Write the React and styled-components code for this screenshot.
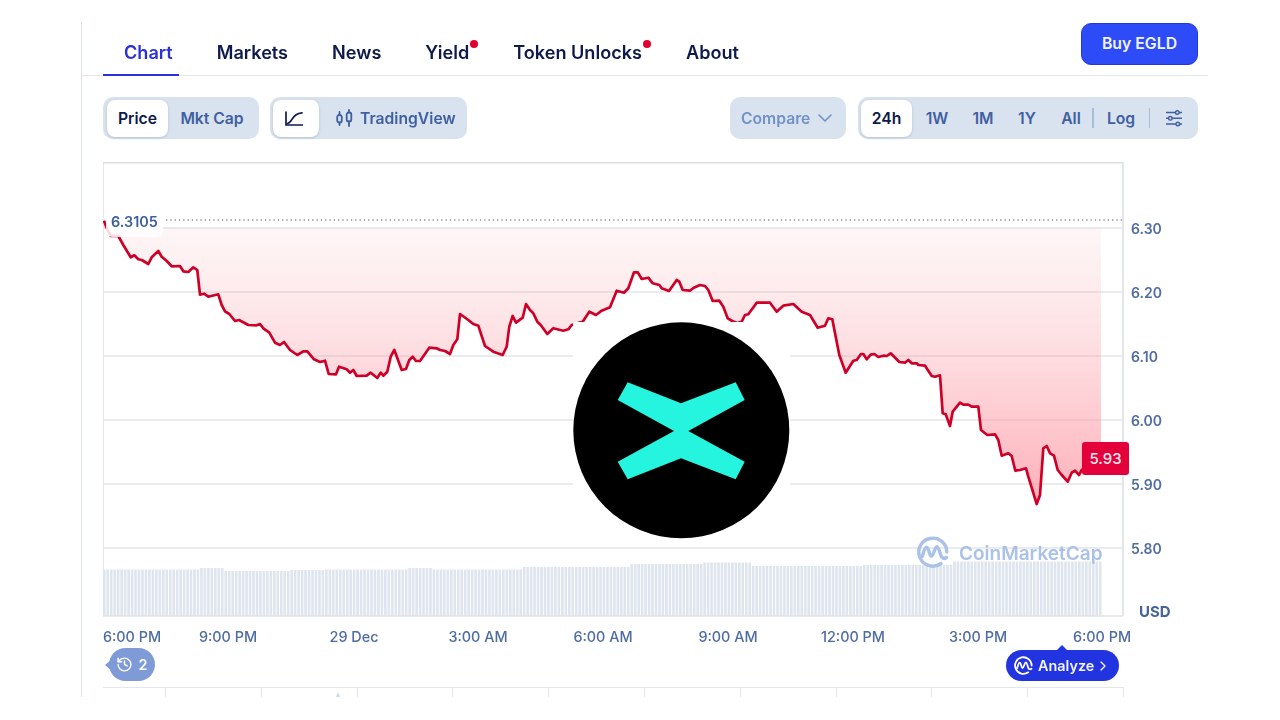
import React from "react";
import styled, { createGlobalStyle } from "styled-components";
import { ChevronDown, ChevronRight, History } from "lucide-react";

const Global = createGlobalStyle`
  html, body { margin: 0; padding: 0; background: #fff; }
  body { font-family: Inter, "Liberation Sans", sans-serif; }
`;

const Page = styled.div`
  width: 1280px;
  height: 720px;
  padding: 22px 0 0 81px;
  box-sizing: border-box;
  background: #fff;
`;
const Panel = styled.div`
  position: relative;
  width: 1127px;
  height: 675px;
  box-sizing: border-box;
  border-left: 1px solid #d9e2ee;
  overflow: hidden;
`;
const Soft = styled.div`
  filter: blur(0.45px);
`;
const TabBar = styled.div`
  display: flex;
  justify-content: space-between;
  height: 54px;
  box-sizing: border-box;
  padding: 0 10px 0 42px;
  border-bottom: 1.5px solid #e1e7ef;
`;
const Tabs = styled.nav`
  display: flex;
  gap: 44px;
`;
const Tab = styled.a`
  position: relative;
  display: block;
  height: 54px;
  box-sizing: border-box;
  padding-top: 19px;
  font-size: 18.1px;
  line-height: 22px;
  font-weight: 600;
  color: ${(p) => (p.$active ? "#2a30dc" : "#0d1a4b")};
  &::after {
    content: ${(p) => (p.$active ? '""' : "none")};
    position: absolute;
    left: -21px;
    right: -6px;
    bottom: 0;
    height: 2px;
    background: #2a30dc;
  }
  &::before {
    content: ${(p) => (p.$dot ? '""' : "none")};
    position: absolute;
    right: -9px;
    top: 18px;
    width: 8px;
    height: 8px;
    border-radius: 50%;
    background: #e2002e;
  }
`;
const BuyButton = styled.button`
  width: 117px;
  height: 42px;
  margin-top: 1px;
  padding: 0 0 2px;
  border: 1.5px solid #2338d8;
  border-radius: 10px;
  background: #2d4bf6;
  color: #f1f4ff;
  font: 600 15.8px Inter, sans-serif;
`;
const Controls = styled.div`
  display: flex;
  justify-content: space-between;
  height: 42px;
  padding: 21px 10px 0 21px;
`;
const ControlSide = styled.div`
  display: flex;
  gap: ${(p) => p.$gap}px;
`;
const Group = styled.div`
  display: flex;
  align-items: center;
  height: 42px;
  box-sizing: border-box;
  padding: 0 ${(p) => p.$right ?? 4}px 0 ${(p) => p.$left ?? 4}px;
  border-radius: 10px;
  background: #d9e3ef;
`;
const Seg = styled.div`
  display: flex;
  align-items: center;
  justify-content: ${(p) => (p.$pad ? "flex-start" : "center")};
  gap: 7px;
  width: ${(p) => p.$w}px;
  height: 37px;
  box-sizing: border-box;
  padding-left: ${(p) => p.$pad || 0}px;
  border-radius: 8px;
  font-size: 15.7px;
  font-weight: 600;
  color: ${(p) => (p.$on ? "#0d1a4b" : "#3f60a0")};
  background: ${(p) => (p.$on ? "#fff" : "transparent")};
  box-shadow: ${(p) => (p.$on ? "0 1px 3px rgba(70,90,130,.25)" : "none")};
`;
const CompareBox = styled(Group)`
  gap: 3px;
  width: 116px;
  padding: 0 0 0 11px;
  font-size: 15.7px;
  font-weight: 600;
  color: #7291c9;
`;
const Divider = styled.span`
  flex: none;
  width: 1.5px;
  height: 20px;
  background: #a9bcdb;
`;
const ChartArea = styled.div`
  position: relative;
  width: 1105px;
  height: 500px;
  margin: 23px 0 0 21px;
`;
const ChartSvg = styled.svg`
  display: block;
`;
const AxisY = styled.text`
  font-size: 14px;
  font-weight: 600;
  fill: #4f6ca3;
  dominant-baseline: central;
`;
const AxisX = styled.text`
  font-size: 14.4px;
  font-weight: 500;
  fill: #4f6ca3;
  text-anchor: middle;
  dominant-baseline: central;
`;
const AxisUnit = styled.text`
  font-size: 15px;
  font-weight: 700;
  fill: #46639b;
  dominant-baseline: central;
`;
const OpenLabel = styled.div`
  position: absolute;
  left: 3px;
  top: 50px;
  width: 57px;
  height: 25px;
  box-sizing: border-box;
  padding: 0 0 0 5px;
  border-radius: 6px;
  background: rgba(255, 255, 255, 0.85);
  font-size: 14.4px;
  line-height: 20px;
  font-weight: 600;
  color: #3d5f9f;
`;
const PriceTag = styled.div`
  position: absolute;
  left: 979px;
  top: 280px;
  width: 47px;
  height: 33px;
  border-radius: 3px;
  background: #e4003a;
  color: #ffe9ee;
  display: flex;
  align-items: center;
  justify-content: center;
  font-size: 15px;
  font-weight: 500;
`;
const Watermark = styled.div`
  position: absolute;
  left: 814px;
  top: 374px;
  display: flex;
  align-items: center;
  gap: 10px;
  font-size: 19px;
  font-weight: 600;
  color: #aac1e8;
`;
const WatermarkName = styled.span`
  padding-top: 3px;
`;
const HistoryPill = styled.div`
  position: absolute;
  left: 6px;
  top: 486px;
  width: 46px;
  height: 33px;
  border-radius: 17px;
  background: #7e9bd8;
  color: #fff;
  display: flex;
  align-items: center;
  justify-content: center;
  gap: 5px;
  font-size: 14.5px;
  font-weight: 600;
  &::before {
    content: "";
    position: absolute;
    left: -4px;
    top: 12px;
    border-style: solid;
    border-width: 5px 6px 5px 0;
    border-color: transparent #7e9bd8 transparent transparent;
  }
`;
const AnalyzeButton = styled.div`
  position: absolute;
  left: 903px;
  top: 488px;
  width: 113px;
  height: 31px;
  box-sizing: border-box;
  padding-left: 8px;
  border-radius: 16px;
  background: #2233e0;
  color: #f2f4ff;
  display: flex;
  align-items: center;
  gap: 5px;
  font-size: 14.4px;
  font-weight: 600;
  &::before {
    content: "";
    position: absolute;
    left: 50px;
    top: -5px;
    border-style: solid;
    border-width: 0 6px 6px 6px;
    border-color: transparent transparent #2233e0 transparent;
  }
`;
const AnalyzeChevron = styled(ChevronRight)`
  margin-left: -4px;
`;
const Strip = styled.div`
  position: relative;
  display: flex;
  width: 1021px;
  height: 12px;
  margin: 25px 0 0 21px;
  border-top: 1.5px solid #e3e7ec;
`;
const StripCell = styled.div`
  flex: ${(p) => (p.$first ? "0 0 63px" : "1")};
  box-sizing: border-box;
  border-right: 1.5px solid #e3e7ec;
`;
const StripMark = styled.div`
  position: absolute;
  left: 232px;
  top: 4px;
  border-style: solid;
  border-width: 0 3.5px 7px 3.5px;
  border-color: transparent transparent #cfdcee transparent;
`;
const LogoBox = styled.div`
  position: absolute;
  left: 491px;
  top: 300px;
  width: 217px;
  height: 217px;
  background: #fff;
`;

const LINE = `104,220.7 106.7,228 110.7,236 118.3,236 123.3,245 130.7,257.3 134.3,255.3 138.3,259.3 141.7,260 148.3,264 151.7,257.3 158.3,251 161.7,256.7 166.7,261 171.7,266.3 180,266 183.3,271.3 188.3,272 193.3,267.3 197.3,270 200,294.7 204,293.7 208.3,296.7 218.3,294.3 221.7,305 225,311.3 229.3,314 235,321 239,320 248.3,325 256.7,325.3 260,324 263.3,328.3 269.3,332.7 275,342.7 280,345 284,342 290,350 297.3,355 303.3,351.3 307.3,351.3 314,359.3 320,362 325,360.7 328.7,374 336,374.3 339,366.7 346.7,369.3 350,372.7 353.3,370 356.7,376 366.7,375.7 370.7,372.7 377.3,378 380.7,372.7 383.3,375.7 387.3,371.7 390.7,356.7 394.3,350 401.7,370 406,369 409.3,360 412.7,356.7 416,361 420,361 429.3,347.7 436.7,348.3 440,350 445,351 450,354 453.3,345 457.3,339.3 460,314 468.3,320 473.3,324 478.3,325.7 485,346 493.3,351.7 502.7,355 506.7,346.7 509.3,326.7 512.7,316 516,322.7 522.7,317.7 526,304 530,310 533.3,313.3 537.3,321.7 540.7,325 547.3,334 553.3,328.3 563.3,330.7 568.3,329.3 571.7,325 578,323 582.7,321.7 589.3,311.7 596,315 601.7,310.7 610,307.3 616.7,290.7 624,292.7 628.3,288.3 634,272.3 637.7,272.3 641.7,279 648.3,277.7 652.7,283.3 659.3,285 661.7,288.3 669,291 676.7,280 679.3,281.7 682.7,290 690,290.7 693.3,288 700,285 705,286 708.3,290 712.7,301 719.3,300.7 723.3,306.7 727.7,318.3 732.3,321 737,323 741.7,321.7 745,315 748.3,314.3 756.7,302.7 770,302.7 776.7,311.7 783.3,305.7 793.3,304 801.7,311.7 810,315 817.7,327.7 825,325.7 828.3,318.3 832.3,319.3 839.3,355 845.7,372.7 853.3,360.7 856.7,360 861,354 863.3,354 866.7,359.3 870.7,354.7 874.3,354 878.3,357 883.3,355.7 886.7,356 890.7,353.3 899.3,362 905,362.7 908.3,360 911.7,363.3 916.7,363.3 918.3,365 925,365.7 931.7,376 935,376.7 940,375.3 942.7,413.3 945.7,414.3 950,426 952.7,411.7 960,402.7 963.3,404.7 968.3,404.7 971.7,406.7 978.3,406.7 981,430 987.3,435 995,434.3 998.3,440 1001.7,455.7 1008.3,453.3 1011.7,456 1015.3,470.7 1020,470 1026,468.3 1028.3,476.7 1036.7,504 1040,495 1043.3,448.3 1046.7,446 1050,453.3 1054,455.7 1057.7,470 1061.7,475 1067.7,481.7 1071.7,472.7 1075,470.7 1079,475 1081.7,470 1090,466`;

const GRID = [
  [228, "6.30"],
  [292, "6.20"],
  [356, "6.10"],
  [420, "6.00"],
  [484, "5.90"],
  [548, "5.80"],
];
const XLABELS = [
  [132, "6:00 PM"],
  [228, "9:00 PM"],
  [354, "29 Dec"],
  [478, "3:00 AM"],
  [603, "6:00 AM"],
  [728, "9:00 AM"],
  [853, "12:00 PM"],
  [978, "3:00 PM"],
  [1102, "6:00 PM"],
];
const VOLUME_STEPS = [
  [200, 569.5], [223, 568], [290, 571], [325, 570], [407, 569.5], [430, 568],
  [520, 569.5], [630, 567], [700, 564], [750, 562.5], [860, 566], [950, 565], [1102, 561.5],
];
const VOLUME = Array.from({ length: 288 }, (_, i) => {
  const x = 103 + i * 3.47;
  const step = VOLUME_STEPS.find((s) => x < s[0]) || VOLUME_STEPS[VOLUME_STEPS.length - 1];
  return { x, top: step[1] };
});

const LineIconSvg = styled.svg`
  margin-right: 4px;
`;
const LineIcon = () => (
  <LineIconSvg width="18" height="15" viewBox="0 0 18 15" fill="none" stroke="#0d1a4b" strokeWidth="1.700" strokeLinecap="round">
    <path d="M1 1v13h16.500" />
    <path d="M2.500 12.500c2.500-.3 3.400-2 4.800-4.600C8.700 5.300 10.800 2.500 17 1.800" />
  </LineIconSvg>
);
const CandleIcon = () => (
  <svg width="17" height="18" viewBox="0 0 17 18" fill="none" stroke="#3f60a0" strokeWidth="1.800" strokeLinecap="round">
    <rect x="1.200" y="6" width="4.600" height="7.500" rx="2" />
    <path d="M3.500 3v3M3.500 13.500v2.500" />
    <rect x="10.700" y="3.500" width="4.600" height="9" rx="2" />
    <path d="M13 1v2.500M13 12.500V17" />
  </svg>
);
const SlidersIcon = () => (
  <svg width="18" height="18" viewBox="0 0 18 18" fill="none" stroke="#3f60a0" strokeWidth="1.400">
    <path d="M1 3.500h9.500M14 3.500h3M1 9.300h2.500M7 9.300h10M1 15h10M14.500 15h2.500" />
    <circle cx="12.300" cy="3.500" r="1.800" />
    <circle cx="5.300" cy="9.300" r="1.800" />
    <circle cx="12.800" cy="15" r="1.800" />
  </svg>
);
const CmcMark = ({ size, color, width = 3.4 }) => (
  <svg width={size} height={size} viewBox="0 0 32 32" fill="none" stroke={color} strokeWidth={width} strokeLinecap="round" strokeLinejoin="round">
    <path d="M29.500 21.500c-1.700 1.200-3.700 1-5-.7-1-1.300-2.700-10-4.500-10-2.300 0-3.400 9.400-5.700 9.400-2.100 0-2.300-9.100-4.700-9.100-2 0-3 5.600-4.400 9.400" />
    <path d="M29.800 16A14 14 0 1 0 24 27.500" />
  </svg>
);

export default function App() {
  const fill = `103,228 ${LINE} 1101,466 1101,228`;
  return (
    <>
      <Global />
      <Page>
        <Panel>
          <Soft>
            <TabBar>
              <Tabs>
                <Tab $active>Chart</Tab>
                <Tab>Markets</Tab>
                <Tab>News</Tab>
                <Tab $dot>Yield</Tab>
                <Tab $dot>Token Unlocks</Tab>
                <Tab>About</Tab>
              </Tabs>
              <BuyButton>Buy EGLD</BuyButton>
            </TabBar>
            <Controls>
              <ControlSide $gap={11}>
                <Group $right={3}>
                  <Seg $on $w={61}>Price</Seg>
                  <Seg $w={88}>Mkt Cap</Seg>
                </Group>
                <Group $left={3} $right={3}>
                  <Seg $on $w={46}><LineIcon /></Seg>
                  <Seg $w={145} $pad={17}><CandleIcon />TradingView</Seg>
                </Group>
              </ControlSide>
              <ControlSide $gap={12}>
                <CompareBox>Compare<ChevronDown size={24} strokeWidth={1.6} /></CompareBox>
                <Group $left={3} $right={0}>
                  <Seg $on $w={51}>24h</Seg>
                  <Seg $w={50}>1W</Seg>
                  <Seg $w={42}>1M</Seg>
                  <Seg $w={46}>1Y</Seg>
                  <Seg $w={42}>All</Seg>
                  <Divider />
                  <Seg $w={55}>Log</Seg>
                  <Divider />
                  <Seg $w={48}><SlidersIcon /></Seg>
                </Group>
              </ControlSide>
            </Controls>
            <ChartArea>
              <ChartSvg width="1105" height="500" viewBox="103 162 1105 500">
                <defs>
                  <linearGradient id="area" gradientUnits="userSpaceOnUse" x1="0" y1="228" x2="0" y2="500">
                    <stop offset="0" stopColor="#f7b5ba" stopOpacity="0.12" />
                    <stop offset="1" stopColor="#ff7f8e" stopOpacity="0.62" />
                  </linearGradient>
                </defs>
                <path d="M103 616V162.700H1123V616" fill="none" stroke="#dcdfe3" strokeWidth="1.500" />
                {GRID.map(([y]) => (
                  <line key={y} x1="103" x2="1123" y1={y} y2={y} stroke="#e2e5e9" strokeWidth="1.500" />
                ))}
                {VOLUME.map((b) => (
                  <rect key={b.x} x={b.x} y={b.top} width="2.600" height={616 - b.top} fill="#dee5ee" />
                ))}
                <line x1="103" x2="1123" y1="616" y2="616" stroke="#dfe3e8" strokeWidth="1.500" />
                <polygon points={fill} fill="url(#area)" />
                <line x1="166" x2="1123" y1="220" y2="220" stroke="#8b8f95" strokeWidth="1.300" strokeDasharray="1.300 3" />
                <polyline points={LINE} fill="none" stroke="#cf0028" strokeWidth="2.700" strokeLinejoin="round" />
                {GRID.map(([y, t]) => (
                  <AxisY key={t} x="1131" y={y}>{t}</AxisY>
                ))}
                <AxisUnit x="1139" y="611">USD</AxisUnit>
                {XLABELS.map(([x, t]) => (
                  <AxisX key={x} x={x} y="636">{t}</AxisX>
                ))}
              </ChartSvg>
              <OpenLabel>6.3105</OpenLabel>
              <PriceTag>5.93</PriceTag>
              <Watermark>
                <CmcMark size={32} color="#aac1e8" />
                <WatermarkName>CoinMarketCap</WatermarkName>
              </Watermark>
              <HistoryPill><History size={17} strokeWidth={2} />2</HistoryPill>
              <AnalyzeButton>
                <CmcMark size={19} color="#fff" width={3} />
                Analyze
                <AnalyzeChevron size={16} strokeWidth={2} />
              </AnalyzeButton>
            </ChartArea>
            <Strip>
              <StripCell $first />
              {Array.from({ length: 10 }, (_, i) => <StripCell key={i} />)}
              <StripMark />
            </Strip>
          </Soft>
          <LogoBox>
            <svg width="217" height="217" viewBox="573 322 217 217">
              <circle cx="681.300" cy="430.300" r="108" fill="#000" />
              <polygon
                fill="#25f5de"
                points="627.700,382.300 681,403.300 735.700,382.300 744.700,400 688.300,431 744.700,461.700 735.700,479.300 681,458.300 627.700,479.300 617.700,461.700 674,431 617.700,400"
              />
            </svg>
          </LogoBox>
        </Panel>
      </Page>
    </>
  );
}
